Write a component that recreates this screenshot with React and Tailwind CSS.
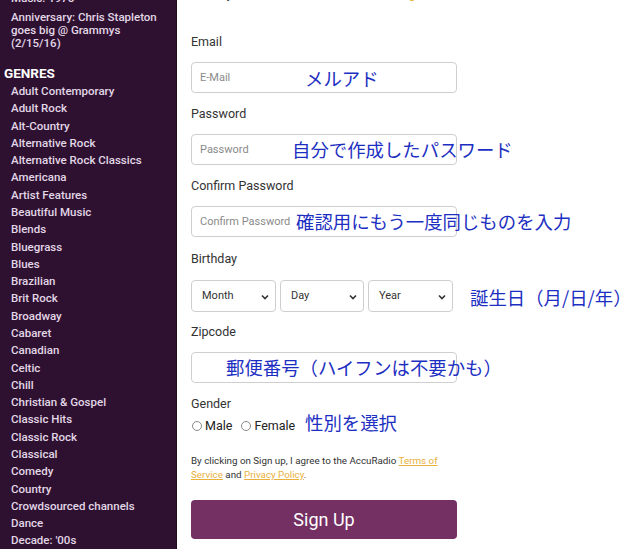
import React from "react";

const genres = [
  "Adult Contemporary",
  "Adult Rock",
  "Alt-Country",
  "Alternative Rock",
  "Alternative Rock Classics",
  "Americana",
  "Artist Features",
  "Beautiful Music",
  "Blends",
  "Bluegrass",
  "Blues",
  "Brazilian",
  "Brit Rock",
  "Broadway",
  "Cabaret",
  "Canadian",
  "Celtic",
  "Chill",
  "Christian & Gospel",
  "Classic Hits",
  "Classic Rock",
  "Classical",
  "Comedy",
  "Country",
  "Crowdsourced channels",
  "Dance",
  "Decade: '00s",
];

const note = "absolute whitespace-nowrap text-[18.4px] leading-[24px] text-[#1d2fc2] font-['Noto_Sans_CJK_JP',sans-serif]";

function Field({ label, children, top = 13, gap = 12 }) {
  return (
    <div style={{ marginTop: top }}>
      <div className="text-[12.5px] leading-[16px] text-[#333]">{label}</div>
      <div style={{ marginTop: gap }}>{children}</div>
    </div>
  );
}

function TextBox({ placeholder, annotation, left, dy = 0 }) {
  return (
    <div className="relative">
      <input
        placeholder={placeholder}
        className="block w-[266px] h-[31px] px-[8px] border border-[#cfcfcf] rounded-[4px] bg-white text-[11px] placeholder:text-[#8a8a8a] outline-none"
      />
      {annotation && (
        <span className={note} style={{ left, top: 3 + dy }}>
          {annotation}
        </span>
      )}
    </div>
  );
}

function Select({ label, width }) {
  return (
    <div
      className="relative h-[32px] border border-[#cfcfcf] rounded-[4px] bg-white flex items-center pl-[10px] text-[11px] text-[#333]"
      style={{ width }}
    >
      {label}
      <svg className="absolute right-[6px] top-[13px]" width="8" height="6" viewBox="0 0 8 6">
        <polyline points="1,1.5 4,4.5 7,1.5" fill="none" stroke="#333" strokeWidth="1.6" />
      </svg>
    </div>
  );
}

function Radio({ label }) {
  return (
    <label className="flex items-center gap-[3px]">
      <span className="w-[10px] h-[10px] rounded-full border border-[#8a8a8a] bg-white" />
      <span>{label}</span>
    </label>
  );
}

export default function App() {
  return (
    <div className="flex h-[549px] w-[640px] overflow-hidden bg-white font-['Roboto',sans-serif]">
      <aside className="w-[177px] shrink-0 bg-[#2e1131] border-r border-[#1d0a1f] text-[#e2d7e6]">
        <ul className="mt-[-10px] text-[11.5px] font-medium">
          <li className="pl-[11px] pr-[8px] py-[2.15px] leading-[13px]">Music: 1975</li>
          <li className="pl-[11px] pr-[8px] pt-[3.5px] pb-[2.15px] leading-[13px]">
            Anniversary: Chris Stapleton goes big @ Grammys (2/15/16)
          </li>
        </ul>
        <div className="mt-[13px] pl-[4px] text-[13.5px] leading-[16px] font-bold text-white">GENRES</div>
        <ul className="mt-[2px] text-[11.5px] font-medium">
          {genres.map((g) => (
            <li key={g} className="pl-[11px] py-[2.15px] leading-[13px] whitespace-nowrap">
              {g}
            </li>
          ))}
        </ul>
      </aside>

      <main className="pl-[14px] flex-1">
        <div className="mt-[-14px] text-[12.5px] leading-[16px] text-[#333] whitespace-nowrap">
          Already have an account?
          <a className="ml-[62px] text-[#e8b547] underline">Log In</a>
        </div>

        <Field label="Email" top={32}>
          <TextBox placeholder="E-Mail" annotation="メルアド" left={114} dy={1} />
        </Field>
        <Field label="Password">
          <TextBox placeholder="Password" annotation="自分で作成したパスワード" left={101} />
        </Field>
        <Field label="Confirm Password">
          <TextBox placeholder="Confirm Password" annotation="確認用にもう一度同じものを入力" left={105} />
        </Field>
        <Field label="Birthday" top={14} gap={13}>
          <div className="relative flex gap-[4px]">
            <Select label="Month" width={85} />
            <Select label="Day" width={84} />
            <Select label="Year" width={85} />
            <span className={note} style={{ left: 279, top: 5 }}>
              誕生日（月/日/年）
            </span>
          </div>
        </Field>
        <Field label="Zipcode" top={12}>
          <TextBox annotation="郵便番号（ハイフンは不要かも）" left={35} />
        </Field>

        <div className="mt-[13px] text-[12.5px] leading-[16px] text-[#333]">Gender</div>
        <div className="relative mt-[6px] h-[16px] flex items-center gap-[9px] text-[12.5px] leading-[16px] text-[#222] pl-[1px]">
          <Radio label="Male" />
          <Radio label="Female" />
          <span className={note} style={{ left: 114, top: -8 }}>
            性別を選択
          </span>
        </div>

        <p className="mt-[20px] w-[270px] text-[9.8px] leading-[14px] text-[#333]">
          By clicking on Sign up, I agree to the AccuRadio{" "}
          <a className="text-[#e9b03c] underline">Terms of Service</a> and{" "}
          <a className="text-[#e9b03c] underline">Privacy Policy</a>.
        </p>

        <button className="mt-[18px] w-[266px] h-[39px] rounded-[4px] bg-[#742f63] text-white text-[18px]">
          Sign Up
        </button>
      </main>
    </div>
  );
}
